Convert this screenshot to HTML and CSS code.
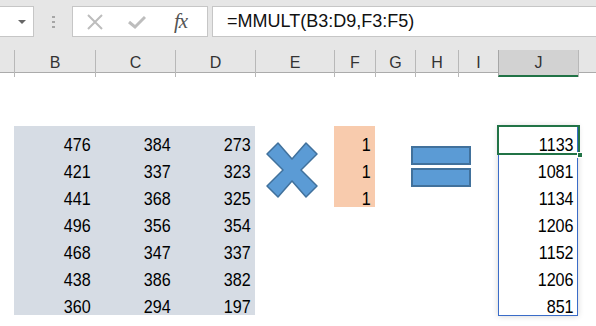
FILE: index.html
```html
<!DOCTYPE html>
<html>
	<head>
		<meta charset="UTF-8">
		<title>MMULT</title>
	<link rel="stylesheet" href="styles.css">
	</head>
	<body>
		<div class="top">
			<div class="bar">
				<div class="namebox"><span class="arrow"></span></div>
				<div class="grip"><i></i><i></i><i></i></div>
				<div class="btns">
					<svg class="ico" width="18" height="16" viewBox="0 0 18 16"><path d="M2 1 L16 15 M16 1 L2 15" stroke="#bdbdbd" stroke-width="2" fill="none"/></svg>
					<svg class="ico ok" width="18" height="16" viewBox="0 0 18 16"><path d="M1 8 L7 13 L17 3" stroke="#bdbdbd" stroke-width="3" fill="none"/></svg>
					<span class="fx">fx</span>
				</div>
				<div class="formula">=MMULT(B3:D9,F3:F5)</div>
			</div>
			<div class="heads">
				<div class="h"></div>
				<div class="h">B</div>
				<div class="h">C</div>
				<div class="h">D</div>
				<div class="h">E</div>
				<div class="h">F</div>
				<div class="h">G</div>
				<div class="h">H</div>
				<div class="h">I</div>
				<div class="h sel">J</div>
				<div class="h"></div>
			</div>
		</div>
		<div class="sheet">
			<div class="matrix">
				<div class="c">476</div><div class="c">384</div><div class="c">273</div>
				<div class="c">421</div><div class="c">337</div><div class="c">323</div>
				<div class="c">441</div><div class="c">368</div><div class="c">325</div>
				<div class="c">496</div><div class="c">356</div><div class="c">354</div>
				<div class="c">468</div><div class="c">347</div><div class="c">337</div>
				<div class="c">438</div><div class="c">386</div><div class="c">382</div>
				<div class="c">360</div><div class="c">294</div><div class="c">197</div>
			</div>
			<svg class="times" width="52" height="56" viewBox="0 0 52 56">
				<polygon points="12,1 26,17 40,1 51,12 35,28 51,44 40,55 26,39 12,55 1,44 17,28 1,12" fill="#5b9bd5" stroke="#41719c" stroke-width="1.5" stroke-linejoin="round"/>
			</svg>
			<div class="vector">
				<div class="c">1</div>
				<div class="c">1</div>
				<div class="c">1</div>
			</div>
			<svg class="equals" width="61" height="42" viewBox="0 0 61 42">
				<rect x="1" y="1" width="58" height="17" fill="#5b9bd5" stroke="#41719c" stroke-width="2"/>
				<rect x="1" y="23" width="58" height="17" fill="#5b9bd5" stroke="#41719c" stroke-width="2"/>
			</svg>
			<div class="result">
				<div class="active"><span class="handle"></span></div>
				<div class="c">1133</div>
				<div class="c">1081</div>
				<div class="c">1134</div>
				<div class="c">1206</div>
				<div class="c">1152</div>
				<div class="c">1206</div>
				<div class="c">851</div>
			</div>
		</div>
	</body>
</html>
```
FILE: styles.css
```css
*{
	margin: 0;
	padding: 0;
	box-sizing: border-box;
}
body{
	width: 596px;
	height: 326px;
	overflow: hidden;
	background: #fff;
	font-family: "Liberation Sans", Arial, sans-serif;
	color: #000;
}
.top{
	background: #e6e6e6;
	padding-top: 6px;
}
.bar{
	display: flex;
	align-items: flex-start;
	height: 44px;
}
.namebox{
	width: 34px;
	height: 31px;
	background: #fff;
	border: 1px solid #c6c6c6;
	border-left: none;
	display: flex;
	align-items: center;
	padding-left: 18px;
}
.arrow{
	width: 0;
	height: 0;
	border-left: 4px solid transparent;
	border-right: 4px solid transparent;
	border-top: 4px solid #666;
}
.grip{
	width: 38px;
	height: 31px;
	display: flex;
	flex-direction: column;
	align-items: center;
	justify-content: center;
	gap: 3px;
}
.grip i{
	display: block;
	width: 3px;
	height: 2px;
	background: #a6a6a6;
}
.btns{
	width: 136px;
	height: 31px;
	background: #fff;
	border: 1px solid #c6c6c6;
	display: flex;
	align-items: center;
	padding-left: 13px;
}
.btns .ico{
	margin-right: 24px;
}
.btns .ok{
	margin-right: 28px;
}
.fx{
	font-family: "Liberation Serif", "Times New Roman", serif;
	font-style: italic;
	font-size: 21px;
	color: #555;
	letter-spacing: -1px;
	line-height: 29px;
}
.formula{
	flex: 1;
	margin-left: 4px;
	height: 31px;
	background: #fff;
	border: 1px solid #c6c6c6;
	border-right: none;
	font-size: 18px;
	line-height: 29px;
	padding-left: 14px;
	color: #111;
}
.heads{
	display: grid;
	grid-template-columns: 14px 81px 80px 80px 79px 41px 40px 43px 40px 80px 1fr;
	height: 23px;
	border-bottom: 1px solid #ababab;
}
.h{
	border-left: 1px solid #b8b8b8;
	text-align: center;
	font-size: 16px;
	line-height: 25px;
	color: #333;
}
.h:first-child{
	border-left: none;
}
.h.sel{
	background: #d2d2d2;
	border-bottom: 2px solid #217346;
	border-left-color: #a6a6a6;
}
.sheet{
	display: grid;
	grid-template-columns: 14px 81px 80px 80px 79px 41px 40px 43px 40px 80px 1fr;
	grid-template-rows: repeat(7, 27px);
	padding-top: 53px;
}
/* digits are tall and narrow in the original font */
.c{
	height: 27px;
	padding-top: 10px;
	padding-right: 5px;
	line-height: 17px;
	text-align: right;
	font-size: 19px;
	transform: scaleX(0.85);
	transform-origin: right;
}
.matrix{
	grid-column: 2 / 5;
	grid-row: 1 / 8;
	background: #d6dce4;
	display: grid;
	grid-template-columns: 81px 80px 80px;
	grid-auto-rows: 27px;
}
.times{
	grid-column: 5;
	grid-row: 1 / 4;
	margin: 16px 0 0 11px;
}
.vector{
	grid-column: 6;
	grid-row: 1 / 4;
	background: #f8cbad;
}
.equals{
	grid-column: 7 / 10;
	grid-row: 1 / 4;
	margin: 20px 0 0 36px;
}
.result{
	grid-column: 10;
	grid-row: 1 / 8;
	position: relative;
	border: 1px solid #3a6cc8;
	box-shadow: 0 0 6px rgba(0,0,0,0.18);
	margin-bottom: -1px;
}
.result .c{
	padding-right: 4px;
}
.result .c:nth-child(2){
	margin-top: -1px;
}
.active{
	position: absolute;
	top: -2px;
	left: -2px;
	width: 83px;
	height: 30px;
	border: 2px solid #217346;
}
.handle{
	position: absolute;
	right: -5px;
	bottom: -5px;
	width: 6px;
	height: 6px;
	background: #217346;
	border: 1px solid #fff;
}
```
